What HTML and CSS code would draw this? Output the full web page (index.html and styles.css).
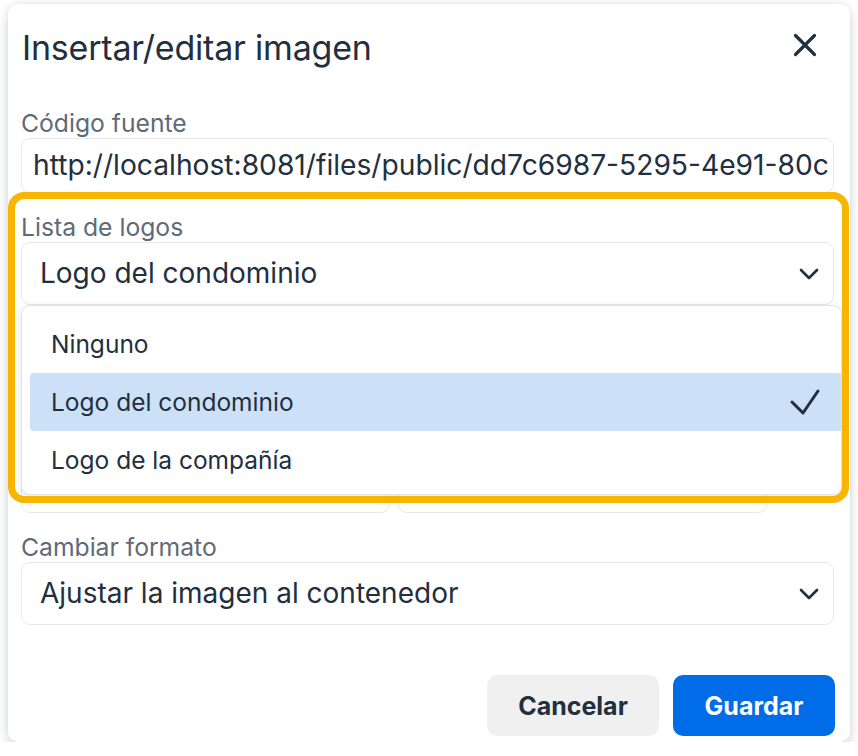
FILE: index.html
```html
<!DOCTYPE html>
<html lang="es">
<head>
<meta charset="utf-8">
<title>Insertar/editar imagen</title>
<link rel="stylesheet" href="styles.css">
</head>
<body>
<div class="dialog">
  <div class="dialog-header">
    <h1 class="dialog-title">Insertar/editar imagen</h1>
    <button class="close-btn" aria-label="Cerrar">
      <svg width="26" height="26" viewBox="0 0 26 26"><path d="M3.5 3.5 L22.5 22.5 M22.5 3.5 L3.5 22.5" stroke="#222f3e" stroke-width="3.2" stroke-linecap="round" fill="none"/></svg>
    </button>
  </div>
  <div class="dialog-body">
    <div class="field">
      <label class="field-label">Código fuente</label>
      <div class="textbox"><span class="textbox-value">http://localhost:8081/files/public/dd7c6987-5295-4e91-80c</span></div>
    </div>
    <div class="field field-focus">
      <label class="field-label">Lista de logos</label>
      <div class="selectbox">
        <span>Logo del condominio</span>
        <svg class="chevron" width="20" height="12" viewBox="0 0 20 12"><polyline points="2,2 10,10 18,2" stroke="#222f3e" stroke-width="2.6" stroke-linecap="round" stroke-linejoin="round" fill="none"/></svg>
      </div>
      <div class="ring"></div>
      <ul class="menu">
        <li class="menu-item">Ninguno</li>
        <li class="menu-item is-selected">Logo del condominio
          <svg class="check" width="32" height="28" viewBox="0 0 32 28"><polyline points="3,14 14,25 29,3" stroke="#222f3e" stroke-width="3" stroke-linecap="round" stroke-linejoin="round" fill="none"/></svg>
        </li>
        <li class="menu-item">Logo de la compañía</li>
      </ul>
    </div>
    <div class="field">
      <label class="field-label field-label-empty"></label>
      <div class="textbox"></div>
    </div>
    <div class="field">
      <label class="field-label field-label-empty"></label>
      <div class="dims">
        <div class="textbox"></div>
        <div class="textbox"></div>
      </div>
    </div>
    <div class="field">
      <label class="field-label">Cambiar formato</label>
      <div class="selectbox">
        <span>Ajustar la imagen al contenedor</span>
        <svg class="chevron" width="20" height="12" viewBox="0 0 20 12"><polyline points="2,2 10,10 18,2" stroke="#222f3e" stroke-width="2.6" stroke-linecap="round" stroke-linejoin="round" fill="none"/></svg>
      </div>
    </div>
  </div>
  <div class="dialog-footer">
    <button class="btn btn-secondary">Cancelar</button>
    <button class="btn btn-primary">Guardar</button>
  </div>
</div>
</body>
</html>
```

FILE: styles.css
```css
* { box-sizing: border-box; }
html, body { margin: 0; padding: 0; background: #ffffff; }
body {
  font-family: Inter, "Noto Sans", sans-serif;
  color: #222f3e;
  padding: 4px 8px 0 8px;
}
.dialog {
  width: 842px;
  height: 738px;
  background: #fff;
  border-radius: 10px;
  box-shadow: 0 0 8px rgba(34, 47, 62, 0.13), 0 8px 14px rgba(34, 47, 62, 0.12);
  display: flex;
  flex-direction: column;
}
.dialog-header {
  display: flex;
  justify-content: space-between;
  align-items: flex-start;
  padding: 24px 32px 0 14px;
}
.dialog-title {
  margin: 0;
  font-size: 34px;
  line-height: 40px;
  font-weight: 400;
  letter-spacing: -0.2px;
}
.close-btn {
  border: 0;
  background: none;
  padding: 0;
  margin-top: 4px;
  width: 26px;
  height: 26px;
  display: flex;
}
.dialog-body {
  flex: 1;
  padding: 40px 16px 0 13px;
  display: flex;
  flex-direction: column;
  gap: 19px;
}
.field { display: flex; flex-direction: column; }
.field-label {
  font-size: 24.7px;
  line-height: 30px;
  color: #5f6a78;
}
.field-label-empty { height: 30px; }
.textbox {
  height: 55px;
  border: 1px solid #e9e9e9;
  border-radius: 9px;
  padding: 0 11px;
  font-size: 28.2px;
  line-height: 53px;
  white-space: nowrap;
  overflow: hidden;
  background: #fff;
}
.selectbox {
  height: 63px;
  border: 1px solid #e9e9e9;
  border-radius: 9px;
  padding: 0 14px 0 18px;
  font-size: 28px;
  line-height: 61px;
  display: flex;
  justify-content: space-between;
  align-items: center;
  background: #fff;
}
.chevron { flex: none; }
.dims { display: flex; gap: 8px; }
.dims .textbox { width: 369px; }

.field-focus { position: relative; }
.ring {
  position: absolute;
  left: -13px;
  top: -20px;
  width: 841px;
  height: 311px;
  border: 7px solid #f7b500;
  border-radius: 16px;
  z-index: 3;
  pointer-events: none;
}
.menu {
  position: absolute;
  left: 0;
  top: 100%;
  width: 821px;
  height: 190px;
  margin: 0;
  padding: 9px 0 6px 8px;
  list-style: none;
  background: #fff;
  border: 1px solid #e4e4e4;
  border-radius: 9px;
  box-shadow: 0 2px 8px rgba(34, 47, 62, 0.12);
  z-index: 2;
}
.menu-item {
  height: 58px;
  line-height: 58px;
  font-size: 24.5px;
  padding: 0 20px 0 21px;
  border-radius: 4px 0 0 4px;
  display: flex;
  justify-content: space-between;
  align-items: center;
}
.menu-item.is-selected { background: #cce1f8; }
.check { flex: none; }

.dialog-footer {
  display: flex;
  justify-content: flex-end;
  gap: 14px;
  padding: 0 15px 6px 0;
}
.btn {
  height: 61px;
  border: 0;
  border-radius: 10px;
  font-family: Inter, "Noto Sans", sans-serif;
  font-size: 25px;
  font-weight: 700;
  padding: 0;
}
.btn-secondary { width: 172px; background: #f0f0f0; color: #222f3e; }
.btn-primary { width: 162px; background: #006ce7; color: #fff; }
```
